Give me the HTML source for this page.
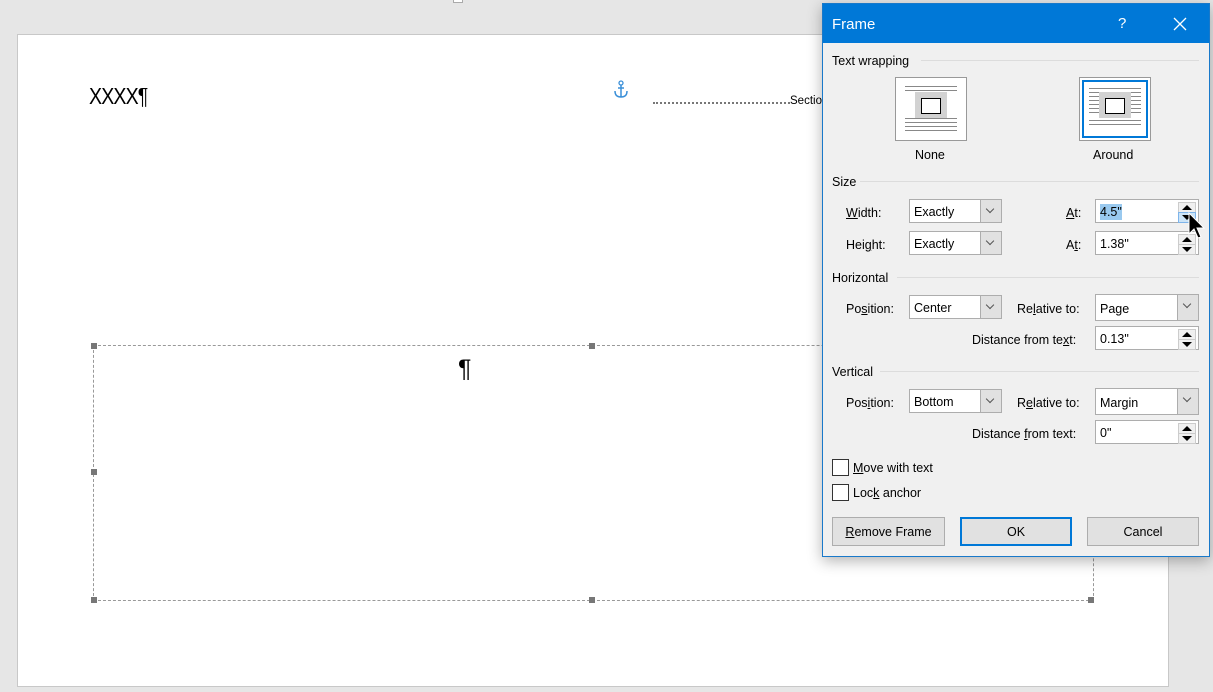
<!DOCTYPE html><html><head><style>
body{margin:0;width:1213px;height:692px;background:#e6e6e6;position:relative;overflow:hidden;font-family:"Liberation Sans",sans-serif;font-size:12.5px;color:#000}
.a{position:absolute}
.page{left:17px;top:34px;width:1150px;height:651px;background:#fff;border:1px solid #c8c8c8}
.h{width:6px;height:6px;background:#777;position:absolute}
.dlg{left:822px;top:3px;width:386px;height:552px;background:#f0f0f0;border:1px solid #1979ca;box-shadow:0 4px 14px rgba(0,0,0,.3)}
.tb{left:0;top:0;width:386px;height:39px;background:#0078d7;color:#fff}
.lbl{white-space:nowrap}
.sec{height:1px;background:#dcdcdc}
.cb{background:#fff;border:1px solid #adadad;height:24px;box-sizing:border-box}
.cb .t{position:absolute;left:4px;top:5px}
.cb .dd{position:absolute;right:0;top:0;width:20px;height:22px;background:#e1e1e1;border-left:1px solid #adadad}
.cb .dd:after{content:"";position:absolute;left:6px;top:6px;width:5px;height:5px;border-right:1px solid #555;border-bottom:1px solid #555;transform:rotate(45deg)}
.sp .up,.sp .dn{position:absolute;right:2px;width:16px;height:9px;background:#f0f0f0;border:1px solid #ccc}
.sp .up{top:2px}.sp .dn{top:12px}
.sp .up:after,.sp .dn:after{content:"";position:absolute;left:3px;border-left:5px solid transparent;border-right:5px solid transparent}
.sp .up:after{top:2px;border-bottom:5px solid #000}.sp .dn:after{top:2px;border-top:5px solid #000}
.btn{background:#e1e1e1;border:1px solid #adadad;height:29px;box-sizing:border-box;text-align:center;line-height:28px}
.chk{width:15px;height:15px;border:1px solid #333;background:#fff}
.ic{background:#fff;border:1px solid #999}
.ln{position:absolute;height:1px;background:#888;left:9px;width:52px}
u{text-decoration:underline}
.f{top:1px}
</style></head><body>
<div class="a" style="left:453px;top:0;width:8px;height:2px;border:1px solid #aaa;border-top:none;background:#fff"></div>
<div class="a page"></div>
<div class="a" style="left:89px;top:83px;font-size:23px;letter-spacing:-1px;transform:scaleX(.85);transform-origin:left">XXXX¶</div>
<svg class="a" style="left:613px;top:80px" width="16" height="20" viewBox="0 0 16 20"><circle cx="8" cy="3" r="2" fill="none" stroke="#3a8fd8" stroke-width="1.3"/><path d="M8 5V17M5 8H11M2 11Q2 17 8 17Q14 17 14 11" fill="none" stroke="#3a8fd8" stroke-width="1.5"/></svg>
<div class="a" style="left:653px;top:102px;width:137px;border-top:2px dotted #777"></div>
<div class="a" style="left:790px;top:95px;font-size:11.5px">Section</div>
<div class="a" style="left:93px;top:345px;width:999px;height:254px;border:1px dashed #999"></div>
<div class="h" style="left:91px;top:343px"></div><div class="h" style="left:589px;top:343px"></div>
<div class="h" style="left:91px;top:469px"></div>
<div class="h" style="left:91px;top:597px"></div><div class="h" style="left:589px;top:597px"></div><div class="h" style="left:1088px;top:597px"></div>
<div class="a" style="left:458px;top:355px;font-size:25px">¶</div>

<div class="a dlg">
<div class="a tb"><span class="a" style="left:9px;top:12px;font-size:15px">Frame</span><span class="a" style="left:295px;top:11px;font-size:15px">?</span>
<svg class="a" style="left:350px;top:13px" width="14" height="14"><path d="M1 1L13 13M13 1L1 13" stroke="#fff" stroke-width="1.3"/></svg></div>
</div>
<div class="a lbl" style="left:832px;top:54px">Text wrapping</div><div class="a sec" style="left:921px;top:60px;width:278px"></div>
<div class="a ic" style="left:895px;top:77px;width:70px;height:62px">
 <div class="ln" style="top:8px"></div><div class="ln" style="top:12px"></div><div class="ln" style="top:40px"></div><div class="ln" style="top:44px"></div><div class="ln" style="top:48px"></div><div class="ln" style="top:52px"></div>
 <div class="a" style="left:19px;top:14px;width:32px;height:26px;background:#d2d2d2"></div><div class="a" style="left:25px;top:20px;width:18px;height:14px;background:#fff;border:1px solid #000"></div></div>
<div class="a ic" style="left:1079px;top:77px;width:70px;height:62px;border-color:#999">
 <div class="a" style="left:2px;top:2px;width:62px;height:54px;border:2px solid #0078d7"></div>
 <div class="ln" style="top:10px"></div><div class="ln" style="top:14px"></div><div class="ln" style="top:18px;width:16px"></div><div class="ln" style="top:22px;width:16px"></div><div class="ln" style="top:26px;width:16px"></div><div class="ln" style="top:30px;width:16px"></div><div class="ln" style="top:34px;width:16px"></div>
 <div class="ln" style="top:18px;left:45px;width:16px"></div><div class="ln" style="top:22px;left:45px;width:16px"></div><div class="ln" style="top:26px;left:45px;width:16px"></div><div class="ln" style="top:30px;left:45px;width:16px"></div><div class="ln" style="top:34px;left:45px;width:16px"></div>
 <div class="ln" style="top:42px"></div><div class="ln" style="top:46px"></div>
 <div class="a" style="left:19px;top:14px;width:32px;height:26px;background:#d2d2d2"></div><div class="a" style="left:25px;top:20px;width:18px;height:14px;background:#fff;border:1px solid #000"></div></div>
<div class="a" style="left:915px;top:148px">None</div><div class="a" style="left:1093px;top:148px">Around</div>
<div class="a" style="left:832px;top:175px">Size</div><div class="a sec" style="left:860px;top:181px;width:339px"></div>
<div class="a" style="left:846px;top:206px"><u>W</u>idth:</div>
<div class="a cb" style="left:909px;top:199px;width:93px"><span class="t">Exactly</span><span class="dd"></span></div>
<div class="a" style="left:1066px;top:206px"><u>A</u>t:</div>
<div class="a cb sp" style="left:1095px;top:199px;width:104px"><span class="t" style="background:#99c9ef;top:4px;padding:1px 0">4.5"</span><span class="up"></span><span class="dn" style="background:#cce4f7;border-color:#7eb4ea"></span></div>
<div class="a" style="left:846px;top:238px">Hei<u>g</u>ht:</div>
<div class="a cb" style="left:909px;top:231px;width:93px"><span class="t">Exactly</span><span class="dd"></span></div>
<div class="a" style="left:1066px;top:238px">A<u>t</u>:</div>
<div class="a cb sp" style="left:1095px;top:231px;width:104px"><span class="t">1.38"</span><span class="up"></span><span class="dn"></span></div>
<div class="a" style="left:832px;top:271px">Horizontal</div><div class="a sec" style="left:897px;top:277px;width:302px"></div>
<div class="a" style="left:846px;top:302px">Po<u>s</u>ition:</div>
<div class="a cb" style="left:909px;top:295px;width:93px"><span class="t">Center</span><span class="dd"></span></div>
<div class="a" style="left:1017px;top:302px">Re<u>l</u>ative to:</div>
<div class="a cb" style="left:1095px;top:294px;width:104px;height:27px"><span class="t" style="top:7px">Page</span><span class="dd" style="height:25px"></span></div>
<div class="a" style="left:972px;top:333px">Distance from te<u>x</u>t:</div>
<div class="a cb sp" style="left:1095px;top:326px;width:104px"><span class="t">0.13"</span><span class="up"></span><span class="dn"></span></div>
<div class="a" style="left:832px;top:365px">Vertical</div><div class="a sec" style="left:880px;top:371px;width:319px"></div>
<div class="a" style="left:846px;top:396px">Pos<u>i</u>tion:</div>
<div class="a cb" style="left:909px;top:389px;width:93px"><span class="t">Bottom</span><span class="dd"></span></div>
<div class="a" style="left:1017px;top:396px">R<u>e</u>lative to:</div>
<div class="a cb" style="left:1095px;top:388px;width:104px;height:27px"><span class="t" style="top:7px">Margin</span><span class="dd" style="height:25px"></span></div>
<div class="a" style="left:972px;top:427px">Distance <u>f</u>rom text:</div>
<div class="a cb sp" style="left:1095px;top:420px;width:104px"><span class="t">0"</span><span class="up"></span><span class="dn"></span></div>
<div class="a chk" style="left:832px;top:459px"></div><div class="a" style="left:853px;top:461px"><u>M</u>ove with text</div>
<div class="a chk" style="left:832px;top:484px"></div><div class="a" style="left:853px;top:486px">Loc<u>k</u> anchor</div>
<div class="a btn" style="left:832px;top:517px;width:113px"><u>R</u>emove Frame</div>
<div class="a btn" style="left:960px;top:517px;width:112px;border:2px solid #0078d7;line-height:26px">OK</div>
<div class="a btn" style="left:1087px;top:517px;width:112px">Cancel</div>
<svg class="a" style="left:1188px;top:212px" width="18" height="28" viewBox="0 0 18 28"><path d="M1 1V22L6 17L10 26L13 25L9 16H16Z" fill="#000" stroke="#fff" stroke-width="1"/></svg>
</body></html>
